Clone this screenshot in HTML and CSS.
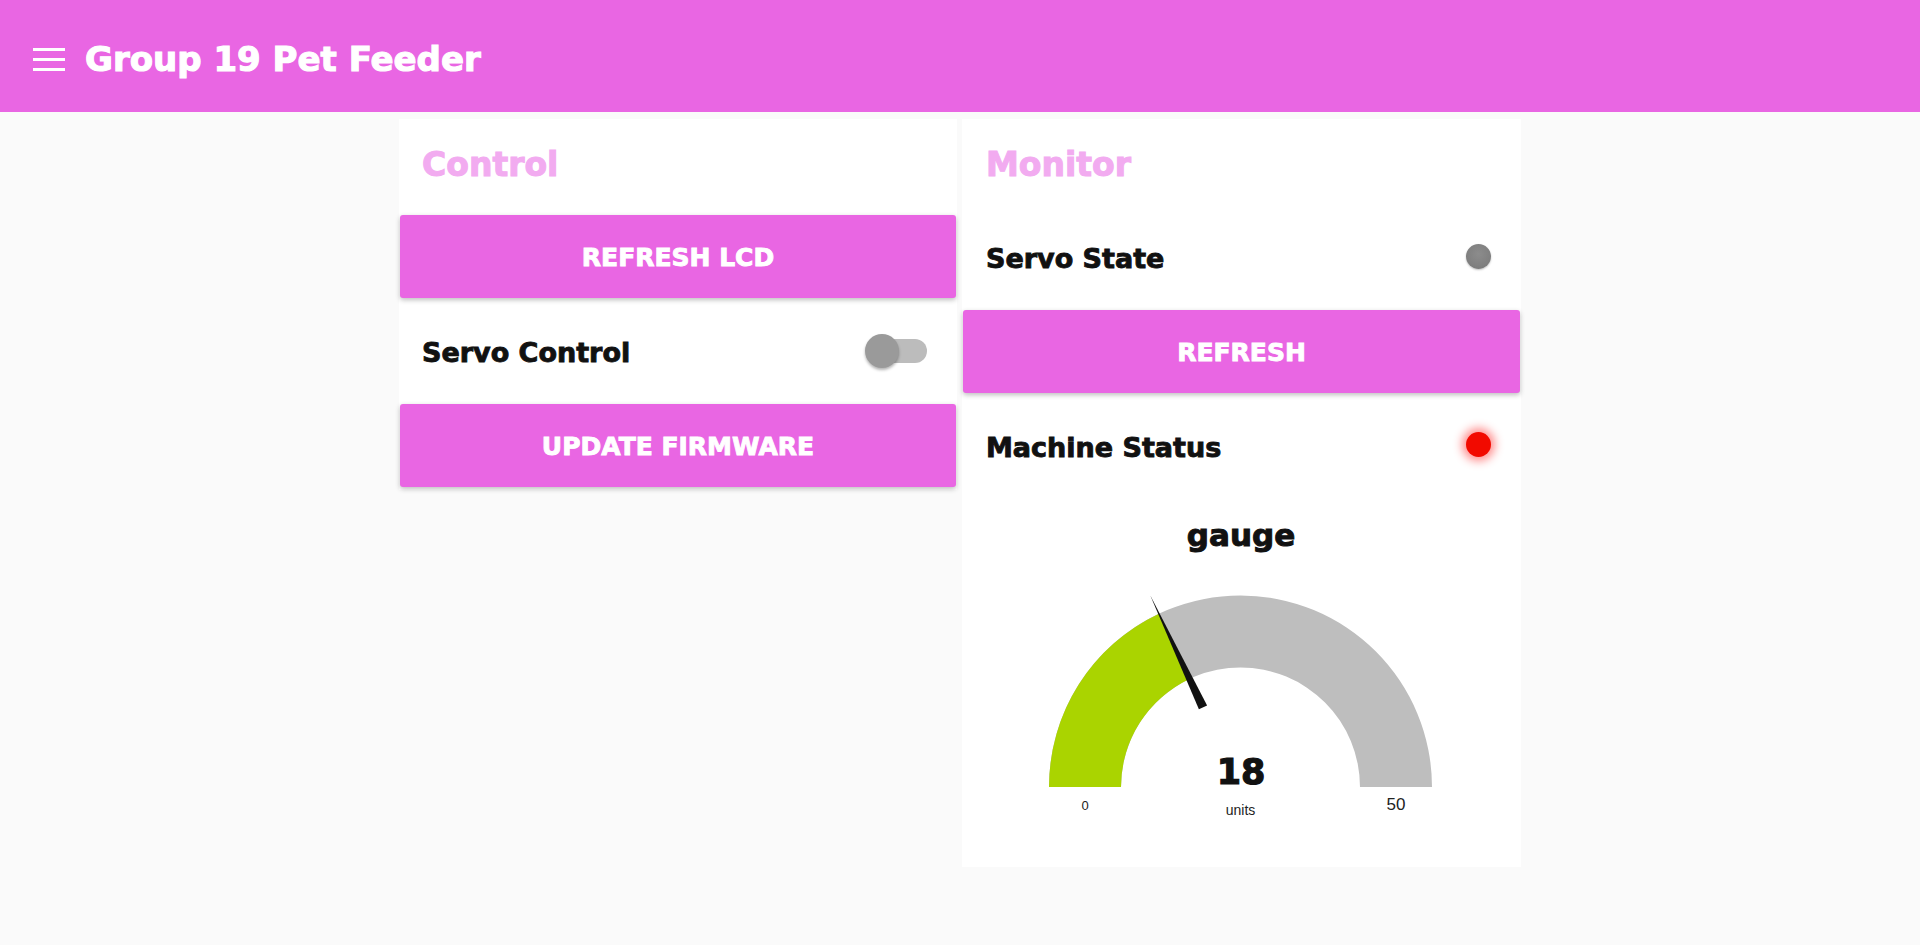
FILE: index.html
```html
<!DOCTYPE html>
<html lang="en">
<head>
<meta charset="utf-8">
<title>Group 19 Pet Feeder</title>
<link rel="stylesheet" href="styles.css">
</head>
<body>
<header class="toolbar">
  <svg class="menu-icon" width="32" height="23" viewBox="0 0 32 23" aria-hidden="true">
    <rect x="0" y="0" width="32" height="3" fill="#fff"/>
    <rect x="0" y="10" width="32" height="3" fill="#fff"/>
    <rect x="0" y="20" width="32" height="3" fill="#fff"/>
  </svg>
  <h1 class="title">Group 19 Pet Feeder</h1>
</header>

<main class="content">
  <section class="card card-left">
    <h2 class="card-title">Control</h2>
    <button class="btn">REFRESH LCD</button>
    <div class="row">
      <span class="row-label">Servo Control</span>
      <span class="switch"><span class="switch-track"></span><span class="switch-knob"></span></span>
    </div>
    <button class="btn">UPDATE FIRMWARE</button>
  </section>

  <section class="card card-right">
    <h2 class="card-title">Monitor</h2>
    <div class="row">
      <span class="row-label">Servo State</span>
      <span class="led led-off"></span>
    </div>
    <button class="btn">REFRESH</button>
    <div class="row">
      <span class="row-label">Machine Status</span>
      <span class="led led-red"></span>
    </div>
    <div class="gauge">
      <svg class="gauge-svg" width="556" height="366" viewBox="0 0 556 366">
        <text class="g-title" x="278" y="47" text-anchor="middle">gauge</text>
        <path d="M 86 288 A 191.5 191.5 0 0 1 469 288 L 397 288 A 119.5 119.5 0 0 0 158 288 Z" fill="#bebebe"/>
        <path d="M 86 288 A 191.5 191.5 0 0 1 196 114.7 L 226.6 179.9 A 119.5 119.5 0 0 0 158 288 Z" fill="#aad400"/>
        <polygon points="244.1,206.5 235.9,210.3 187.2,96.2" fill="#111"/>
        <text class="g-value" x="278" y="285" text-anchor="middle">18</text>
        <text class="g-units" x="277.5" y="316" text-anchor="middle">units</text>
        <text class="g-min" x="122" y="311" text-anchor="middle">0</text>
        <text class="g-max" x="433" y="311" text-anchor="middle">50</text>
      </svg>
    </div>
  </section>
</main>
</body>
</html>
```

FILE: styles.css
```css
* { box-sizing: border-box; }

html, body {
  margin: 0;
  padding: 0;
}

body {
  background: #fafafa;
  font-family: "Liberation Sans", Arial, sans-serif;
  color: #111;
}

.toolbar {
  height: 112px;
  background: #e966e3;
  display: flex;
  align-items: center;
  padding: 6px 0 0 33px;
}

.menu-icon {
  display: block;
  flex: none;
}

.title {
  margin: 0 0 0 20px;
  font-family: "DejaVu Sans", sans-serif;
  font-weight: 700;
  font-size: 34px;
  color: #fff;
  -webkit-text-stroke: 1.1px #fff;
}

.content {
  display: flex;
  justify-content: center;
  align-items: flex-start;
  gap: 5px;
  margin-top: 7px;
}

.card {
  background: #fff;
  display: flex;
  flex-direction: column;
  gap: 11.5px;
  padding: 0 1px 2px 1px;
}

.card-left { width: 558px; padding-bottom: 3px; }
.card-right { width: 559px; }

.card-title {
  margin: 0;
  height: 84.5px;
  padding: 26px 0 0 22px;
  font-family: "DejaVu Sans", sans-serif;
  font-weight: 700;
  font-size: 33px;
  line-height: normal;
  color: #f2abf0;
  -webkit-text-stroke: 1px #f2abf0;
}

.card-right .card-title { padding-left: 23px; }

.btn {
  display: block;
  width: 100%;
  height: 83px;
  border: none;
  border-radius: 3px;
  background: #e966e3;
  color: #fff;
  font-family: "DejaVu Sans", sans-serif;
  font-weight: 700;
  font-size: 25px;
  padding: 2px 0 0 0;
  -webkit-text-stroke: 0.9px #fff;
  box-shadow: 0 2px 5px rgba(0, 0, 0, 0.26);
  cursor: pointer;
}

.row {
  height: 83px;
  display: flex;
  align-items: center;
  justify-content: space-between;
  padding: 3px 29px 0 22px;
}

.card-right .row { padding-left: 23px; }

.row-label {
  font-family: "DejaVu Sans", sans-serif;
  font-weight: 700;
  font-size: 27px;
  color: #111;
  -webkit-text-stroke: 0.9px #111;
}

.switch {
  position: relative;
  width: 62px;
  height: 34px;
  margin-top: -3px;
  flex: none;
}

.switch-track {
  position: absolute;
  left: 5px;
  right: 0;
  top: 5px;
  height: 24px;
  border-radius: 12px;
  background: #bcbcbc;
}

.switch-knob {
  position: absolute;
  left: 0;
  top: 0;
  width: 34px;
  height: 34px;
  border-radius: 50%;
  background: #9a9a9a;
  box-shadow: 0 2px 3px rgba(0, 0, 0, 0.3);
}

.led {
  width: 25px;
  height: 25px;
  border-radius: 50%;
  flex: none;
  margin-top: -3px;
}

.led-off {
  background: radial-gradient(circle at 50% 40%, #8c8c8c 0%, #808080 60%, #747474 100%);
  box-shadow: 0 1px 2px rgba(0, 0, 0, 0.25);
}

.led-red {
  background: #f20a00;
  box-shadow: 0 0 10px 4px rgba(255, 0, 0, 0.45);
  margin-top: -6px;
}

.gauge {
  height: 366.5px;
}

.gauge-svg {
  display: block;
}

.g-title {
  font-family: "DejaVu Sans", sans-serif;
  font-weight: 700;
  font-size: 31px;
  fill: #111;
  stroke: #111;
  stroke-width: 1px;
}

.g-value {
  font-family: "DejaVu Sans", sans-serif;
  font-weight: 700;
  font-size: 35px;
  fill: #111;
  stroke: #111;
  stroke-width: 1.2px;
}

.g-units {
  font-family: "Liberation Sans", Arial, sans-serif;
  font-size: 14px;
  fill: #222;
}

.g-min {
  font-family: "Liberation Sans", Arial, sans-serif;
  font-size: 13px;
  fill: #222;
}

.g-max {
  font-family: "Liberation Sans", Arial, sans-serif;
  font-size: 17px;
  fill: #222;
}
```
